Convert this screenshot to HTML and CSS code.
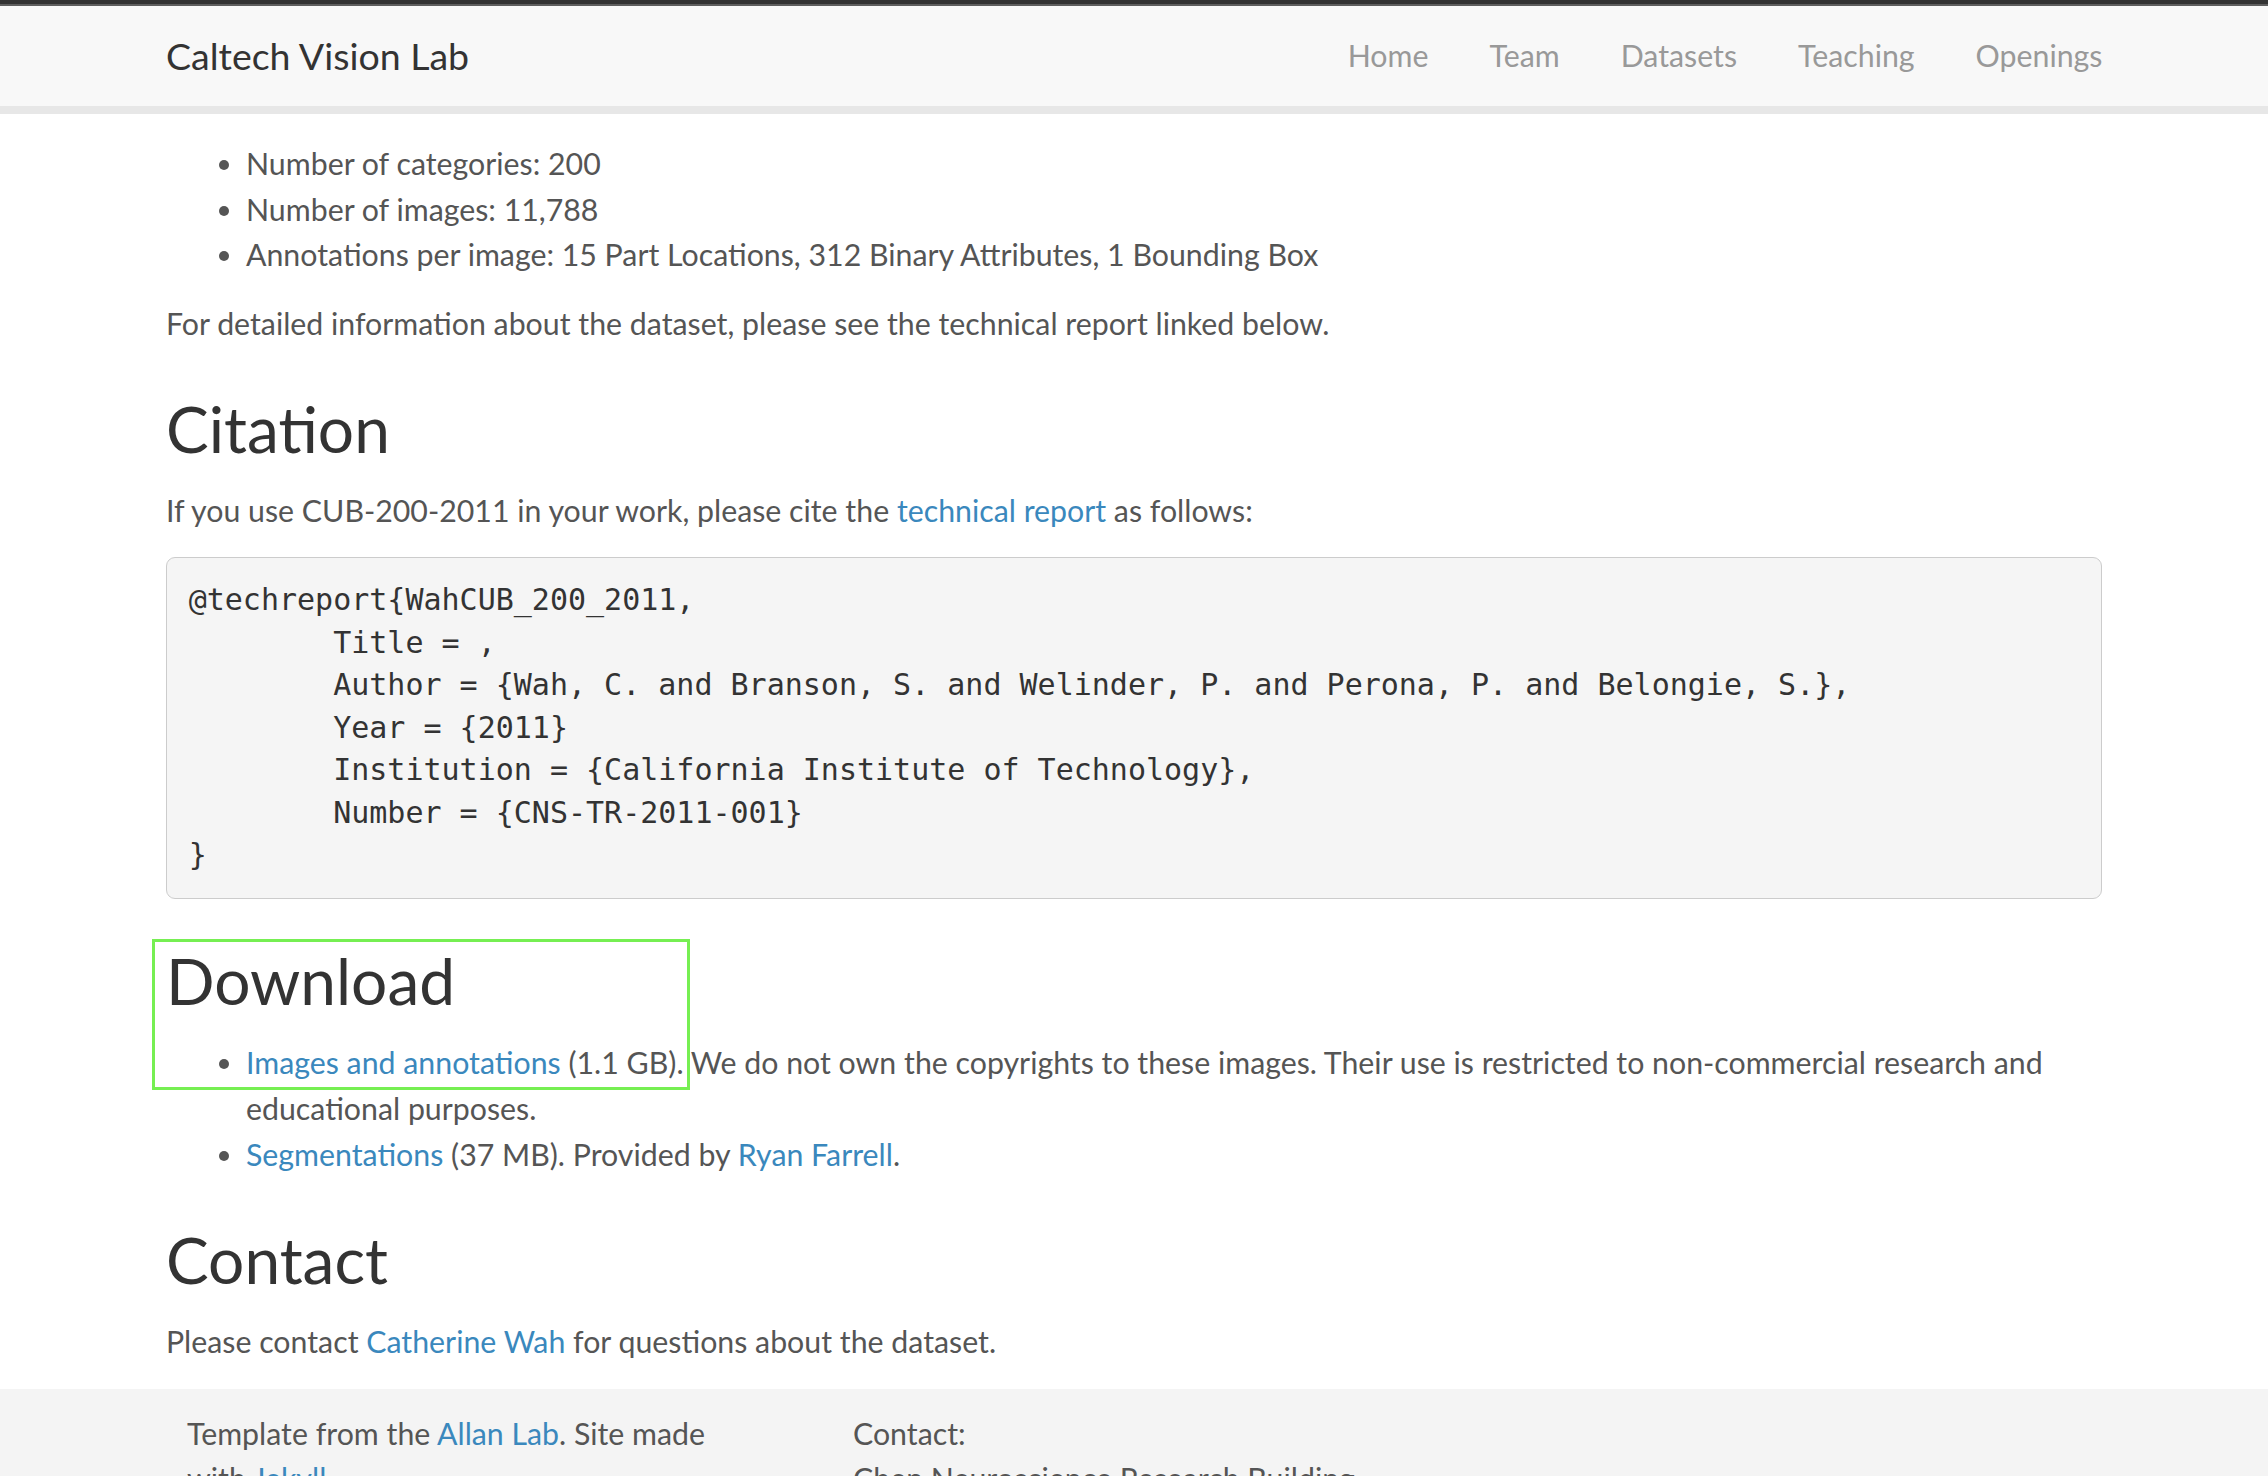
FILE: index.html
```html
<!DOCTYPE html>
<html lang="en">
<head>
<meta charset="utf-8">
<title>CUB-200-2011 | Caltech Vision Lab</title>
<link rel="stylesheet" href="styles.css">
</head>
<body>
<header class="navbar">
  <div class="navbar-inner">
    <a class="brand" href="#">Caltech Vision Lab</a>
    <ul class="nav">
      <li><a href="#">Home</a></li>
      <li><a href="#">Team</a></li>
      <li><a href="#">Datasets</a></li>
      <li><a href="#">Teaching</a></li>
      <li><a href="#">Openings</a></li>
    </ul>
  </div>
</header>

<main class="content">
  <ul class="list">
    <li>Number of categories: 200</li>
    <li>Number of images: 11,788</li>
    <li>Annotations per image: 15 Part Locations, 312 Binary Attributes, 1 Bounding Box</li>
  </ul>
  <p>For detailed information about the dataset, please see the technical report linked below.</p>

  <h2>Citation</h2>
  <p>If you use CUB-200-2011 in your work, please cite the <a href="#">technical report</a> as follows:</p>
  <pre class="code">@techreport{WahCUB_200_2011,
        Title = ,
        Author = {Wah, C. and Branson, S. and Welinder, P. and Perona, P. and Belongie, S.},
        Year = {2011}
        Institution = {California Institute of Technology},
        Number = {CNS-TR-2011-001}
}</pre>

  <h2>Download</h2>
  <ul class="list">
    <li><a href="#">Images and annotations</a> (1.1 GB). We do not own the copyrights to these images. Their use is restricted to non-commercial research and educational purposes.</li>
    <li><a href="#">Segmentations</a> (37 MB). Provided by <a href="#">Ryan Farrell</a>.</li>
  </ul>

  <h2>Contact</h2>
  <p>Please contact <a href="#">Catherine Wah</a> for questions about the dataset.</p>
</main>

<footer class="footer">
  <div class="footer-inner">
    <div class="footer-col footer-col-left">
      <p>Template from the <a href="#">Allan Lab</a>. Site made with <a href="#">Jekyll</a>.</p>
    </div>
    <div class="footer-col">
      <p>Contact:<br>Chen Neuroscience Research Building<br>California Institute of Technology<br>Pasadena, CA 91125</p>
    </div>
  </div>
</footer>

<div class="highlight-box"></div>
</body>
</html>
```

FILE: styles.css
```css
html, body {
  margin: 0;
  padding: 0;
}

body {
  font-family: Lato, "Liberation Sans", sans-serif;
  font-size: 30.3px;
  line-height: 45.7px;
  color: #555555;
  background: #ffffff;
  position: relative;
}

a {
  color: #3a88bd;
  text-decoration: none;
}

/* ---------- navbar ---------- */
.navbar {
  border-top: 4px solid #333333;
  box-shadow: inset 0 2px 0 #5e5e5e;
  background: #f8f8f8;
  border-bottom: 8px solid #e7e7e7;
}

.navbar-inner {
  width: 1936px;
  margin: 0 auto;
  height: 102px;
  display: flex;
  align-items: center;
  justify-content: space-between;
}

.brand {
  color: #333333;
  font-size: 37.5px;
  padding-top: 2px;
}

.nav {
  list-style: none;
  margin: 0 -31px 0 0;
  padding: 2px 0 0 0;
  display: flex;
}

.nav a {
  display: block;
  padding: 0 30.5px;
  color: #999999;
}

/* ---------- content ---------- */
.content {
  width: 1936px;
  margin: 0 auto;
  padding-top: 27px;
  padding-bottom: 1px;
}

.content p {
  margin: 0 0 22.86px;
}

.list {
  margin: 0 0 22.86px;
  padding-left: 80px;
}

h2 {
  font-family: Lato, "Liberation Sans", sans-serif;
  font-weight: 400;
  font-size: 64px;
  line-height: 75.4px;
  color: #333333;
  margin: 44px 0 22px;
}

.code {
  font-family: "DejaVu Sans Mono", "Liberation Mono", monospace;
  font-size: 30px;
  line-height: 42.43px;
  color: #333333;
  background: #f5f5f5;
  border: 1px solid #cccccc;
  border-radius: 9px;
  padding: 21.7px;
  margin: 0 0 22.86px;
  white-space: pre;
  overflow: hidden;
}

/* ---------- footer ---------- */
.footer {
  background: #f4f4f4;
  padding-top: 22px;
}

.footer-inner {
  width: 1936px;
  margin: 0 auto;
  display: flex;
}

.footer-col {
  padding-left: 21px;
}

.footer-col-left {
  width: 560px;
  margin-right: 85px;
}

.footer-col p {
  margin: 0 0 22.86px;
}

/* ---------- annotation overlay ---------- */
.highlight-box {
  position: absolute;
  left: 152px;
  top: 939px;
  width: 532px;
  height: 145px;
  border: 3px solid #76ef52;
  pointer-events: none;
}
```
